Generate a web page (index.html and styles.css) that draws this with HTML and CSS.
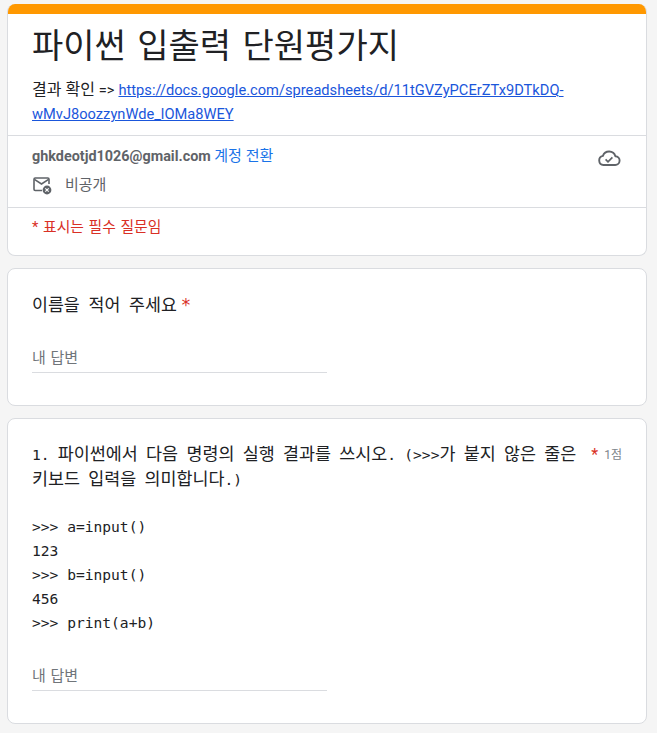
FILE: index.html
```html
<!DOCTYPE html>
<html lang="ko">
<head>
    <meta charset="UTF-8">
    <meta name="viewport" content="width=device-width, initial-scale=1.0">
    <title>파이썬 입출력 단원평가지</title>
    <link rel="stylesheet" href="styles.css">
</head>
<body>
    <div class="form">
        <div class="card header-card">
            <div class="accent"></div>
            <div class="title-block">
                <h1>파이썬 입출력 단원평가지</h1>
                <p class="desc">결과 확인 <span class="arrow">=&gt;</span> <a href="#">https://docs.google.com/spreadsheets/d/11tGVZyPCErZTx9DTkDQ-wMvJ8oozzynWde_lOMa8WEY</a></p>
            </div>
            <div class="account">
                <div class="account-info">
                    <div class="account-line"><b>ghkdeotjd1026@gmail.com</b> <a href="#">계정 전환</a></div>
                    <div class="private">
                        <svg width="20" height="20" viewBox="0 0 20 20">
                            <path d="M10 15.5H3.2a1.2 1.2 0 0 1-1.2-1.2V4.2A1.2 1.2 0 0 1 3.2 3h12.6A1.2 1.2 0 0 1 17 4.2V9" fill="none" stroke="#5f6368" stroke-width="1.6"/>
                            <path d="M2.4 4.4l7.1 4.6 7.1-4.6" fill="none" stroke="#5f6368" stroke-width="1.6"/>
                            <circle cx="15" cy="15" r="4.4" fill="#5f6368"/>
                            <path d="M13.3 13.3l3.4 3.4m0-3.4l-3.4 3.4" stroke="#fff" stroke-width="1.1"/>
                        </svg>
                        <span>비공개</span>
                    </div>
                </div>
                <svg class="cloud" width="24" height="24" viewBox="0 0 24 24">
                    <path d="M6.5 19A4.6 4.6 0 0 1 5.9 9.9 6.6 6.6 0 0 1 18.4 10.2 4.4 4.4 0 0 1 18 19Z" fill="none" stroke="#5f6368" stroke-width="1.9"/>
                    <path d="M8.6 13.4l2.4 2.4 4.4-4.4" fill="none" stroke="#5f6368" stroke-width="1.7"/>
                </svg>
            </div>
            <div class="required-note">* 표시는 필수 질문임</div>
        </div>

        <div class="card question-card">
            <div class="name-title">이름을 적어 주세요<span class="star">*</span></div>
            <div class="answer">내 답변</div>
        </div>

        <div class="card question-card">
            <div class="question-head">
                <div class="question-text"><span class="latin">1.</span> 파이썬에서 다음 명령의 실행 결과를 쓰시오<span class="latin">.</span> <span class="latin">(&gt;&gt;&gt;</span>가 붙지 않은 줄은 키보드 입력을 의미합니다<span class="latin">.)</span></div>
                <span class="star">*</span>
                <span class="points">1점</span>
            </div>
            <pre class="code">&gt;&gt;&gt; a=input()
123
&gt;&gt;&gt; b=input()
456
&gt;&gt;&gt; print(a+b)</pre>
            <div class="answer">내 답변</div>
        </div>
    </div>
</body>
</html>
```

FILE: styles.css
```css
body {
    margin: 0;
    background-color: #f5f5f5;
    color: #202124;
    font-family: Roboto, "Noto Sans CJK KR", sans-serif;
    overflow: hidden;
}

.form {
    width: 640px;
    margin-left: 7px;
    padding-top: 4px;
    display: flex;
    flex-direction: column;
    gap: 12px;
}

.card {
    background-color: #fff;
    border: 1px solid #dadce0;
    border-radius: 8px;
    box-sizing: border-box;
}

.header-card {
    height: 252px;
    overflow: hidden;
    border-top: none;
}

.accent {
    height: 10px;
    background-color: #ff9800;
}

.title-block {
    padding: 0 24px;
    height: 122px;
    box-sizing: border-box;
    border-bottom: 1px solid #dadce0;
}

h1 {
    margin: 0;
    padding-top: 12px;
    font-size: 34px;
    font-weight: 400;
    line-height: 40px;
    word-spacing: 3px;
}

.desc {
    margin: 12px 0 0;
    font-size: 16px;
    line-height: 23px;
}

.arrow {
    font-size: 14.6px;
}

.desc a {
    font-size: 14.67px;
    color: #1a56db;
}

.account {
    height: 72px;
    box-sizing: border-box;
    padding: 8px 24px 0;
    display: flex;
    justify-content: space-between;
    border-bottom: 1px solid #dadce0;
}

.account-line {
    font-size: 14.4px;
    line-height: 24px;
    color: #5f6368;
}

.account-line a {
    font-size: 15px;
    color: #1a73e8;
    text-decoration: none;
}

.private {
    margin-top: 4px;
    display: flex;
    align-items: center;
    gap: 13px;
    font-size: 15px;
    line-height: 24px;
    color: #5f6368;
}

.cloud {
    margin-right: 1px;
    margin-top: 2px;
}

.required-note {
    padding: 9px 24px;
    font-size: 14.8px;
    line-height: 20px;
    word-spacing: 1px;
    color: #d93025;
}

.question-card {
    padding: 24px;
}

.name-title {
    height: 53px;
    font-family: "DejaVu Sans Mono", "Noto Sans CJK KR", monospace;
    font-size: 17.3px;
    line-height: 24px;
    word-spacing: -1.6px;
}

.star {
    color: #d93025;
    margin-left: 4px;
}

.answer {
    width: 295px;
    font-size: 15px;
    line-height: 24px;
    padding-bottom: 2px;
    color: #70757a;
    border-bottom: 1px solid #dadce0;
    margin-bottom: 8px;
    word-spacing: 1px;
}

.question-head {
    display: flex;
    align-items: flex-start;
    font-size: 16px;
    line-height: 24px;
}

.question-text {
    flex: 1;
    margin-top: -1px;
    font-family: "DejaVu Sans Mono", "Noto Sans CJK KR", monospace;
    font-size: 17.4px;
    word-spacing: -2.2px;
    word-break: keep-all;
}

.latin {
    font-size: 14.6px;
}

.question-head .star {
    margin-left: 6px;
    margin-right: 6px;
}

.points {
    font-size: 12px;
    color: #80868b;
}

.code {
    margin: 23px 0 29px;
    font-family: "DejaVu Sans Mono", monospace;
    font-size: 14.6px;
    line-height: 24px;
    color: #202124;
}
```
